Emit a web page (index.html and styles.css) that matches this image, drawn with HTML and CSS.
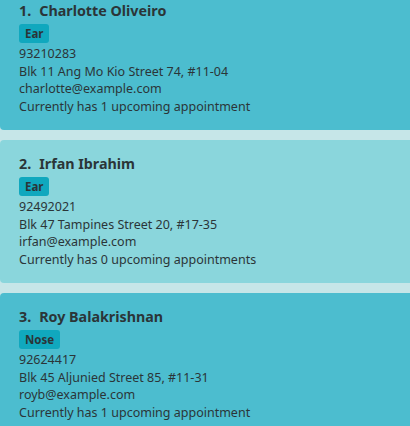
FILE: index.html
```html
<!DOCTYPE html>
<html>
<head>
<meta charset="utf-8">
<link rel="stylesheet" href="styles.css">
</head>
<body>
<div class="list">
  <div class="card odd">
    <div class="name"><span>1.</span><span>Charlotte Oliveiro</span></div>
    <div class="tags"><span class="tag">Ear</span></div>
    <div class="line">93210283</div>
    <div class="line">Blk 11 Ang Mo Kio Street 74, #11-04</div>
    <div class="line">charlotte@example.com</div>
    <div class="line">Currently has 1 upcoming appointment</div>
  </div>
  <div class="card even">
    <div class="name"><span>2.</span><span>Irfan Ibrahim</span></div>
    <div class="tags"><span class="tag">Ear</span></div>
    <div class="line">92492021</div>
    <div class="line">Blk 47 Tampines Street 20, #17-35</div>
    <div class="line">irfan@example.com</div>
    <div class="line">Currently has 0 upcoming appointments</div>
  </div>
  <div class="card odd">
    <div class="name"><span>3.</span><span>Roy Balakrishnan</span></div>
    <div class="tags"><span class="tag">Nose</span></div>
    <div class="line">92624417</div>
    <div class="line">Blk 45 Aljunied Street 85, #11-31</div>
    <div class="line">royb@example.com</div>
    <div class="line">Currently has 1 upcoming appointment</div>
  </div>
</div>
</body>
</html>
```
FILE: styles.css
```css
html, body {
  margin: 0;
  padding: 0;
  background: #c6e6e8;
  overflow: hidden;
}
body {
  font-family: "Noto Sans", "Open Sans", sans-serif;
  color: #2b3538;
}
.list {
  display: flex;
  flex-direction: column;
  gap: 10px;
  margin-top: -13px;
  margin-right: -10px;
}
.card {
  padding: 14px 19px 15px;
  border-radius: 4px;
  display: flex;
  flex-direction: column;
  height: 143px;
  box-sizing: border-box;
}
.odd { background: #4cbdcf; }
.even { background: #8ad6dc; }
.name {
  display: flex;
  gap: 8px;
  font-weight: 700;
  font-size: 14.3px;
  line-height: 20px;
}
.tags {
  display: flex;
  margin: 3px 0 2px;
}
.tag {
  background: #10a8be;
  border-radius: 3px;
  font-size: 11.5px;
  font-weight: 700;
  line-height: 19px;
  padding: 0 6px;
  text-align: center;
}
.line {
  font-size: 12.5px;
  line-height: 17.5px;
}
```
